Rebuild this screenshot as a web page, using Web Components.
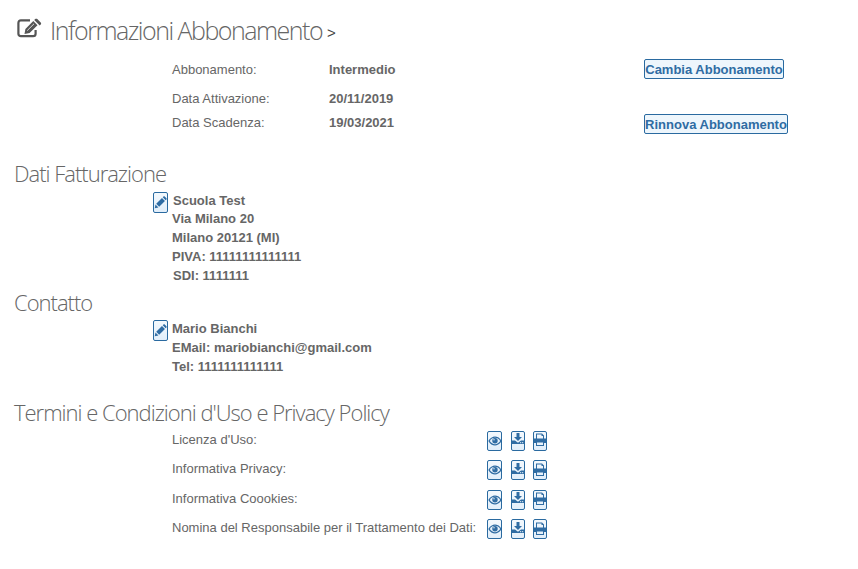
<!DOCTYPE html>
<html><head><meta charset="utf-8">
<style>
html,body{margin:0;padding:0;background:#fff}
body{font:13px/18px "Liberation Sans",Arial,sans-serif;color:#666}
</style></head><body>
<sub-page></sub-page>
<template id="ic-pencil"><svg viewBox="0 0 14 14" width="13" height="13"><path fill="#2f6ca3" d="M.8 13.200l.8-4 3.200 3.200zM2.400 8.400L8.600 2.200l3.200 3.200-6.200 6.200zM9.400 1.400l.8-.8c.4-.4 1-.4 1.400 0l1.800 1.800c.4.4.4 1 0 1.400l-.8.8z"/></svg></template>
<template id="ic-eye"><svg viewBox="0 0 14 14" width="14" height="14"><path fill="#2f6ca3" d="M.3 7C2 4 4.500 2.500 7 2.500S12 4 13.700 7C12 10 9.500 11.500 7 11.500S2 10 .3 7z"/><path fill="#eaf3fb" d="M1.800 7C3 5 5 3.800 7 3.800S11 5 12.200 7C11 9 9 10.200 7 10.200S3 9 1.800 7z"/><circle cx="7" cy="6.800" r="2.700" fill="#2f6ca3"/><circle cx="6" cy="5.800" r=".7" fill="#eaf3fb"/></svg></template>
<template id="ic-down"><svg viewBox="0 0 14 14" width="14" height="14" style="margin-bottom:3px"><path fill="#2f6ca3" d="M5.500 1h3v4h2.500L7 9 3 5h2.500zM.5 8.500h3.500l3 2.300L10 8.500h3.500V12H.5z"/><rect x="9" y="10.200" width="1.200" height="1" fill="#eaf3fb"/><rect x="11" y="10.200" width="1.200" height="1" fill="#eaf3fb"/></svg></template>
<template id="ic-print"><svg viewBox="0 0 14 14" width="14" height="14" style="margin-bottom:1px"><path fill="#2f6ca3" fill-rule="evenodd" d="M3 .5h6l2 2V5.500h2.500v4.500H11v3H3v-3H.5V5.500H3zM4 1.500v4h6V3H8.500V1.500zM4 9.500V12h6V9.500z"/></svg></template>
<script>
class SubHeading extends HTMLElement{
  constructor(){super();const r=this.attachShadow({mode:'open'});
  r.innerHTML=`<style>:host{display:block;font:300 22px/28px "Open Sans",sans-serif;color:#666;letter-spacing:-1px;margin:0 0 0 14px;white-space:nowrap}</style><slot></slot>`}
}
customElements.define('sub-heading',SubHeading);
class MainHeading extends HTMLElement{
  constructor(){super();const r=this.attachShadow({mode:'open'});
  r.innerHTML=`<style>:host{display:flex;align-items:center;height:32px;margin-left:17px;font:300 25px/32px "Open Sans",sans-serif;color:#666;letter-spacing:-1.5px}
  svg{width:25px;height:20px;margin:0 8px 4px 0;flex:none;overflow:visible}
  .ttl{margin-bottom:2px}
  .gt{font:15px "Liberation Sans",sans-serif;letter-spacing:0;color:#444;margin-left:5px;padding-top:3px}</style>
  <svg viewBox="0 0 25 20"><path fill="none" stroke="#555" stroke-width="2.200" stroke-linejoin="round" d="M18.600 11v3.700c0 1.500-1 2.500-2.500 2.500H3.900c-1.500 0-2.500-1-2.500-2.500V3.900c0-1.500 1-2.500 2.500-2.500H13"/><path fill="#555" d="M7.500 15l.9-5.100L16.300 2l4.200 4.200-7.900 7.900zM17.200 1.100l1-1c.6-.6 1.500-.6 2.100 0l3.400 3.400c.6.6.6 1.500 0 2.100l-1 1z"/><path stroke="#fff" stroke-width=".8" d="M10.200 11.600L17 4.800"/></svg><span class="ttl"><slot></slot></span><span class="gt">&gt;</span>`}
}
customElements.define('main-heading',MainHeading);
class IconBtn extends HTMLElement{
  constructor(){super();const r=this.attachShadow({mode:'open'});
  const w=this.getAttribute('w')||14,h=this.getAttribute('h')||20;
  r.innerHTML=`<style>:host{display:flex;align-items:center;justify-content:center;box-sizing:border-box;width:${w}px;height:${h}px;border:1px solid #2a6aa0;border-radius:2px;background:linear-gradient(#f4f9fd,#e1eefa);flex:none;overflow:hidden}</style><span id="i" style="display:flex"></span>`;
  r.getElementById('i').append(document.getElementById('ic-'+this.getAttribute('icon')).content.cloneNode(true));}
}
customElements.define('icon-btn',IconBtn);
class TextBtn extends HTMLElement{
  constructor(){super();const r=this.attachShadow({mode:'open'});
  r.innerHTML=`<style>:host{display:inline-block;box-sizing:border-box;height:20px;border:1px solid #2a6aa0;border-radius:2px;background:#eef6fc;color:#2f6ca3;font:bold 13px/20px "Liberation Sans",sans-serif;white-space:nowrap;text-align:center}</style><slot></slot>`}
}
customElements.define('text-btn',TextBtn);
class InfoRow extends HTMLElement{
  constructor(){super();const r=this.attachShadow({mode:'open'});
  r.innerHTML=`<style>:host{display:grid;grid-template-columns:157px 315px auto;grid-template-rows:var(--h,24px);align-items:center;justify-content:start;margin-left:172px}
  .v{font-weight:bold}.l,.v{position:relative;top:.5px}</style><div class="l"><slot name="l"></slot></div><div class="v"><slot name="v"></slot></div><div style="display:flex"><slot name="b"></slot></div>`}
}
customElements.define('info-row',InfoRow);
class AddrBlock extends HTMLElement{
  constructor(){super();const r=this.attachShadow({mode:'open'});
  r.innerHTML=`<style>:host{display:flex;margin-left:153px;font-weight:bold;line-height:18.750px;gap:4px}
  .t{margin-top:var(--tm,0)}</style><icon-btn icon="pencil" w="15" h="21"></icon-btn><div class="t"><slot></slot></div>`}
}
customElements.define('addr-block',AddrBlock);
class DocRow extends HTMLElement{
  constructor(){super();const r=this.attachShadow({mode:'open'});
  r.innerHTML=`<style>:host{display:grid;grid-template-columns:315px auto;margin-left:172px;height:29.500px}
  .a{display:flex;gap:8.500px;align-items:flex-start;padding-top:1px}.l{line-height:18px;padding-top:1px;white-space:nowrap}</style>
  <div class="l"><slot></slot></div><div class="a"><icon-btn icon="eye" w="15" h="20"></icon-btn><icon-btn icon="down" w="14" h="20"></icon-btn><icon-btn icon="print" w="14" h="20"></icon-btn></div>`}
}
customElements.define('doc-row',DocRow);
class SubPage extends HTMLElement{
  constructor(){super();const r=this.attachShadow({mode:'open'});
  r.innerHTML=`<style>:host{display:block;padding-top:15px;height:554px;overflow:hidden}
  .top{margin-top:10px}
  .s1{margin-top:30px}.s2{margin-top:2.500px}.s3{margin-top:21px}
  .m1{margin-top:5px;--tm:-.5px}.m2{margin-top:4px;--tm:.5px}.m3{margin-top:4px}</style>
  <main-heading>Informazioni Abbonamento</main-heading>
  <div class="top">
   <info-row style="--h:24px"><span slot="l">Abbonamento:</span><span slot="v">Intermedio</span><text-btn slot="b" style="width:140px">Cambia Abbonamento</text-btn></info-row>
   <info-row style="--h:34px"><span slot="l">Data Attivazione:</span><span slot="v">20/11/2019</span></info-row>
   <info-row style="--h:14px"><span slot="l">Data Scadenza:</span><span slot="v">19/03/2021</span><text-btn slot="b" style="width:144px;position:relative;top:2px">Rinnova Abbonamento</text-btn></info-row>
  </div>
  <sub-heading class="s1">Dati Fatturazione</sub-heading>
  <addr-block class="m1"><div style="margin-left:1px">Scuola Test</div><div>Via Milano 20</div><div>Milano 20121 (MI)</div><div>PIVA: 11111111111111</div><div style="margin-left:1px">SDI: 1111111</div></addr-block>
  <sub-heading class="s2">Contatto</sub-heading>
  <addr-block class="m2"><div>Mario Bianchi</div><div>EMail: mariobianchi@gmail.com</div><div>Tel: 1111111111111</div></addr-block>
  <sub-heading class="s3">Termini e Condizioni d'Uso e Privacy Policy</sub-heading>
  <div class="m3"><doc-row>Licenza d'Uso:</doc-row><doc-row>Informativa Privacy:</doc-row><doc-row>Informativa Coookies:</doc-row><doc-row>Nomina del Responsabile per il Trattamento dei Dati:</doc-row></div>`}
}
customElements.define('sub-page',SubPage);
</script>
</body></html>
